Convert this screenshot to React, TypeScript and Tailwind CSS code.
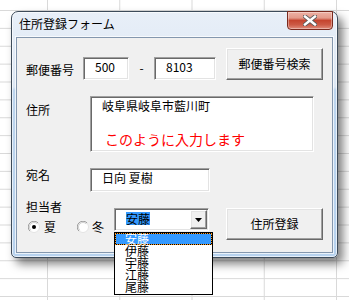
import React from "react";

const sunken =
  "border border-t-[#a0a0a0] border-l-[#a0a0a0] border-b-white border-r-white shadow-[inset_1px_1px_0_#696969,inset_-1px_-1px_0_#e3e3e3] bg-white";
const raised =
  "border border-t-white border-l-white border-b-[#696969] border-r-[#696969] shadow-[inset_-1px_-1px_0_#a0a0a0,inset_1px_1px_0_#e3e3e3] bg-[#f0f0f0]";

function Radio({ checked }: { checked: boolean }) {
  return (
    <svg width="12" height="12" viewBox="0 0 12 12" className="shrink-0">
      <circle cx="6" cy="6" r="5.5" fill="#ffffff" stroke="#e3e3e3" />
      <path d="M1.9 10.1 A5.5 5.5 0 0 1 10.1 1.9" fill="none" stroke="#a0a0a0" />
      <path d="M2.8 9.2 A4.5 4.5 0 0 1 9.2 2.8" fill="none" stroke="#d0d0d0" />
      {checked && <circle cx="6" cy="6" r="2" fill="#000" />}
    </svg>
  );
}

function CloseButton() {
  return (
    <div className="mr-[4px] mt-[-1px] w-[46px] h-[19px] rounded-b-[4px] border border-[#7a2a1e] bg-[linear-gradient(180deg,#eeb1a4_0%,#e39a8a_35%,#c5452f_50%,#cc5a45_75%,#e08d7c_100%)] shadow-[inset_0_0_0_1px_rgba(255,255,255,0.35)] flex items-center justify-center">
      <svg width="14" height="11" viewBox="0 0 14 11">
        <path d="M2 1.5 L12 9.5 M12 1.5 L2 9.5" stroke="#5a5a5a" strokeWidth="4.2" strokeLinecap="square" />
        <path d="M2 1.5 L12 9.5 M12 1.5 L2 9.5" stroke="#ffffff" strokeWidth="2.4" strokeLinecap="square" />
      </svg>
    </div>
  );
}

export default function App() {
  return (
    <div className="relative w-[349px] h-[300px] overflow-hidden bg-white bg-[linear-gradient(to_right,#d9d9d9_1px,transparent_1px),linear-gradient(to_bottom,#d9d9d9_1px,transparent_1px)] bg-size-[72.25px_17.875px] bg-position-[47px_10px] pt-[11px] pl-[11px] font-['Noto_Sans_CJK_JP','Noto_Sans',sans-serif] text-[12px] leading-[12px] text-black">
      <div className="w-[327px] h-[247px] rounded-t-[7px] rounded-b-[5px] border border-[#3d4b5a] bg-[linear-gradient(180deg,#e8eff8_0px,#dce7f4_75px,#bdd5ee_78px,#b7d2ee_100%)] shadow-[5px_6px_10px_rgba(0,0,0,0.5),inset_0_0_0_1px_rgba(255,255,255,0.65)] flex flex-col">
        {/* title bar */}
        <div className="h-[25px] flex justify-between items-start">
          <span className="ml-[7px] mt-[6px]">住所登録フォーム</span>
          <CloseButton />
        </div>
        {/* client area */}
        <div className="mx-[4px] h-[216px] border border-[#8497ae] bg-[#f0f0f0] shadow-[0_0_0_1px_rgba(255,255,255,0.7)] flex flex-col">
          {/* row 1 */}
          <div className="flex items-start mt-[10px]">
            <span className="ml-[9px] w-[57px] mt-[16px]">郵便番号</span>
            <div className={sunken + " w-[46px] h-[23px] mt-[9px] pl-[11px] pt-[3px]"}>500</div>
            <span className="w-[25px] text-center mt-[14px]">-</span>
            <div className={sunken + " w-[62px] h-[23px] mt-[9px] pl-[11px] pt-[3px]"}>8103</div>
            <button className={raised + " ml-[10px] w-[97px] h-[32px] flex items-center justify-center"}>
              郵便番号検索
            </button>
          </div>
          {/* row 2 */}
          <div className="flex items-start mt-[16px]">
            <span className="ml-[9px] w-[64px] mt-[8px]">住所</span>
            <div className={sunken + " w-[224px] h-[56px] pl-[11px] pt-[3px] flex flex-col"}>
              <span>岐阜県岐阜市藍川町</span>
              <span className="ml-[3px] mt-[20px] text-[14px] leading-[14px] text-[#ff0000]">
                このように入力します
              </span>
            </div>
          </div>
          {/* row 3 */}
          <div className="flex items-start mt-[16px]">
            <span className="ml-[9px] w-[64px] mt-[1px]">宛名</span>
            <div className={sunken + " w-[120px] h-[24px] pl-[11px] pt-[3px]"}>日向 夏樹</div>
          </div>
          {/* bottom section */}
          <div className="flex items-start mt-[9px]">
            <div className="ml-[9px] w-[88px] flex flex-col">
              <span>担当者</span>
              <div className="flex items-center mt-[8px] ml-[2px] h-[12px]">
                <Radio checked />
                <span className="ml-[4px]">夏</span>
                <span className="ml-[21px] flex">
                  <Radio checked={false} />
                </span>
                <span className="ml-[3px]">冬</span>
              </div>
            </div>
            <div className={sunken + " relative w-[95px] h-[23px] mt-[7px] p-[1px] flex"}>
              <div className="flex-1 pl-[10px] pt-[2px]">
                <span className="inline-block bg-[#3399ff] leading-[13px]">安藤</span>
              </div>
              <div className={raised + " w-[17px] h-full flex items-center justify-center"}>
                <svg width="7" height="4" viewBox="0 0 7 4">
                  <path d="M0 0 H7 L3.5 4 Z" fill="#000" />
                </svg>
              </div>
              {/* dropdown list */}
              <div className="absolute left-[-1px] top-[23px] w-[99px] h-[63px] border border-black bg-white z-10 flex flex-col">
                <div className="h-[12px] pl-[10px] bg-[#3399ff] text-white shadow-[inset_0_0_0_1px_#000] outline outline-dotted outline-[#ff9a1f] -outline-offset-1">
                  安藤
                </div>
                <div className="h-[12px] pl-[10px]">伊藤</div>
                <div className="h-[12px] pl-[10px]">宇藤</div>
                <div className="h-[12px] pl-[10px]">江藤</div>
                <div className="h-[12px] pl-[10px]">尾藤</div>
              </div>
            </div>
            <button className={raised + " ml-[17px] mt-[7px] w-[97px] h-[32px] flex items-center justify-center"}>
              住所登録
            </button>
          </div>
        </div>
      </div>
    </div>
  );
}
